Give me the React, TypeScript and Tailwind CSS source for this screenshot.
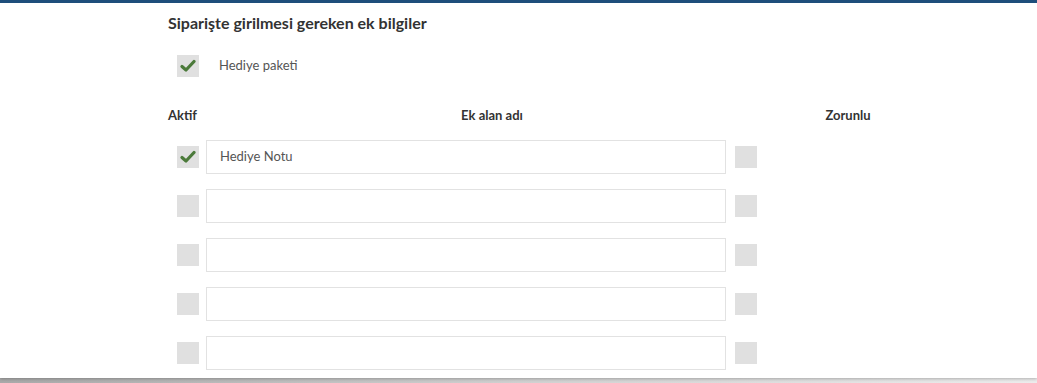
import React from "react";

function Check() {
  return (
    <svg width="16" height="14" viewBox="0 0 16 14" className="block">
      <path d="M2 7.5 L6 11 L14 2.5" fill="none" stroke="#4b7a3a" strokeWidth="3.2" strokeLinecap="round" strokeLinejoin="round" />
    </svg>
  );
}

function Box({ checked }: { checked?: boolean }) {
  return (
    <div className="w-[22px] h-[22px] bg-[#e0e0e0] flex items-center justify-center shrink-0">
      {checked ? <Check /> : null}
    </div>
  );
}

const rows = ["Hediye Notu", "", "", "", ""];

export default function App() {
  return (
    <div className="w-[1037px] h-[383px] overflow-hidden bg-gradient-to-r from-[#a9a9a9] via-[#d0d0d0] to-[#ececec]" style={{ fontFamily: "Lato, 'Open Sans', sans-serif" }}>
      <div className="h-[378px] bg-white border-t-[3px] border-[#1e4e7b] shadow-[0_1px_3px_rgba(0,0,0,0.25)]">
        <div className="pl-[168px] pt-[9px]">
          <h2 className="text-[16px] leading-[22px] font-bold text-[#333]">Siparişte girilmesi gereken ek bilgiler</h2>
          <div className="flex items-center mt-[21px] pl-[9px]">
            <Box checked />
            <span className="ml-[20px] text-[13px] text-[#555]">Hediye paketi</span>
          </div>
          <div className="flex items-center mt-[29px] text-[13px] font-bold text-[#333] leading-[18px]">
            <div className="w-[38px]">Aktif</div>
            <div className="w-[572px] text-center">Ek alan adı</div>
            <div className="w-[140px] text-center">Zorunlu</div>
          </div>
          <div className="flex flex-col gap-[15px] mt-[16px]">
            {rows.map((r, i) => (
              <div key={i} className="flex items-center pl-[9px]">
                <Box checked={i === 0} />
                <div className="ml-[7px] w-[520px] h-[34px] border border-[#e2e2e2] flex items-center pl-[13px] text-[13px] text-[#555]">
                  {r}
                </div>
                <div className="ml-[9px]">
                  <Box />
                </div>
              </div>
            ))}
          </div>
        </div>
      </div>
    </div>
  );
}
